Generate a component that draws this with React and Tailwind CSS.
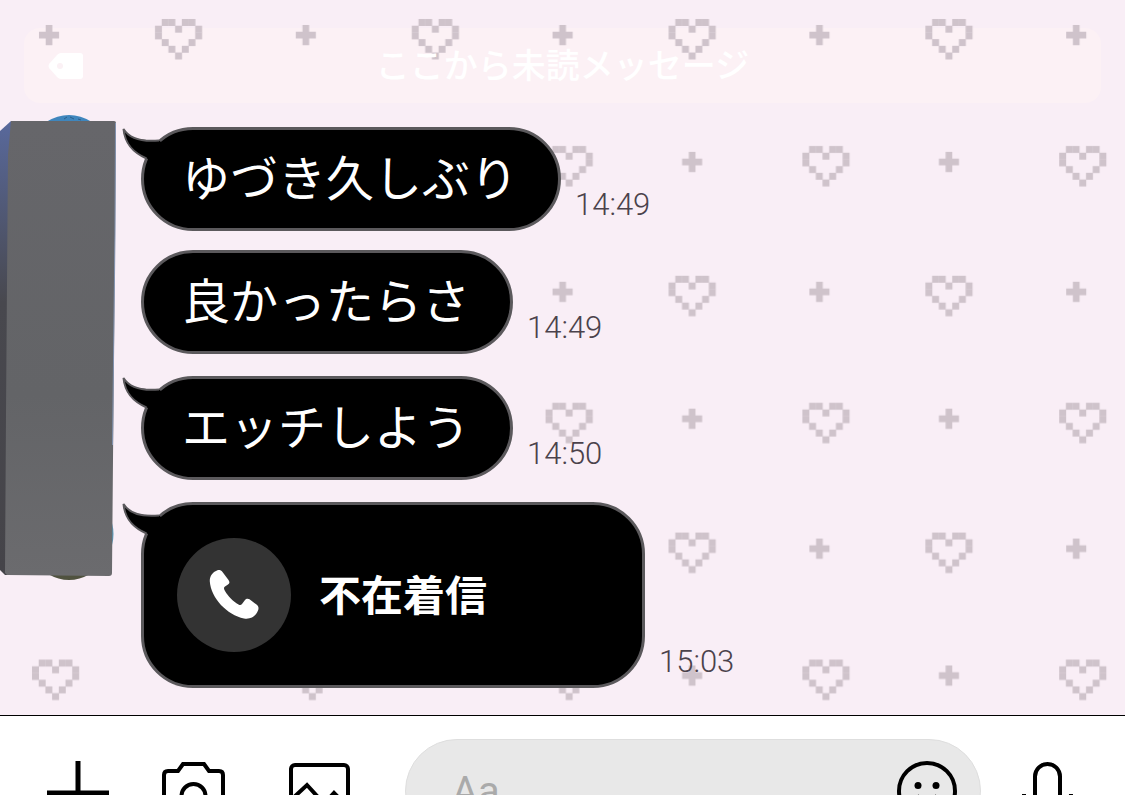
import React, { useState } from 'react';

const HEART_CELLS = [
  [1, 0], [2, 0], [4, 0], [5, 0],
  [0, 1], [3, 1], [6, 1],
  [0, 2], [6, 2],
  [1, 3], [5, 3],
  [2, 4], [4, 4],
  [3, 5],
];

const messages = [
  { id: 1, text: 'ゆづき久しぶり', time: '14:49', tail: true },
  { id: 2, text: '良かったらさ', time: '14:49', tail: false },
  { id: 3, text: 'エッチしよう', time: '14:50', tail: true },
  { id: 4, text: '不在着信', time: '15:03', tail: true, call: true },
];

const PixelHeart = ({ x, y }) => (
  <g transform={`translate(${x} ${y}) scale(6.7)`}>
    {HEART_CELLS.map(([cx, cy]) => (
      <rect key={`${cx}-${cy}`} x={cx} y={cy} width="1.04" height="1.04" />
    ))}
  </g>
);

const PixelPlus = ({ x, y }) => (
  <path transform={`translate(${x} ${y}) scale(6.7)`} d="M1 0h1v1h1v1h-1v1h-1v-1h-1v-1h1z" />
);

const Wallpaper = () => (
  <svg className="absolute inset-0 -z-10 h-full w-full" aria-hidden="true">
    <defs>
      <pattern id="hearts" width="256.8" height="256.8" patternUnits="userSpaceOnUse">
        <g fill="#cfc3cb">
          <PixelPlus x={39} y={25} />
          <PixelHeart x={155} y={19} />
          <PixelHeart x={32} y={146} />
          <PixelPlus x={168.5} y={152} />
        </g>
      </pattern>
    </defs>
    <rect width="100%" height="100%" fill="url(#hearts)" />
  </svg>
);

const Avatar = () => (
  <svg className="h-[465px] w-[117px]" viewBox="0 0 117 465" role="img" aria-label="Profile">
    <defs>
      <linearGradient id="side" x1="0" y1="0" x2="0" y2="1">
        <stop offset="0" stopColor="#59699c" />
        <stop offset="0.4" stopColor="#48484e" />
        <stop offset="1" stopColor="#454449" />
      </linearGradient>
      <linearGradient id="face" x1="0" y1="0" x2="0" y2="1">
        <stop offset="0" stopColor="#66666a" />
        <stop offset="0.6" stopColor="#636467" />
        <stop offset="1" stopColor="#6b6b6e" />
      </linearGradient>
    </defs>
    <path d="M46 7Q69 -7 92 7z" fill="#3f86bd" />
    <path d="M64 4l3-2M70 2l4 2M78 4l3 1" stroke="#2a5f8c" strokeWidth="1" />
    <path d="M48 459Q69 471 90 459z" fill="#50523f" />
    <path d="M112 408q3 11 0 22z" fill="#5b9cbc" />
    <path d="M0 16L11 6v454H5L0 455z" fill="url(#side)" />
    <path d="M11 6H114Q116 6 116 8L115 120L112 458Q112 461 109 461L7 460L5 458L6 300L8 40z" fill="url(#face)" />
    <path d="M115.500 8L115 120L112.500 330" fill="none" stroke="#8293b0" strokeWidth="1" />
  </svg>
);

const Tail = () => (
  <svg className="absolute -left-[22px] -top-[3px] h-9 w-12" viewBox="0 0 48 36" aria-hidden="true">
    <path d="M1 2C7 11 18 14 36 13L42 17L30 34L24 31C12 26 3 18 1 2z" fill="#000" />
    <path d="M37 13.500C20 15 7 11 1.500 2C3 18 12 26 24.500 31.500" fill="none" stroke="#5b595c" strokeWidth="2" />
  </svg>
);

const PhoneIcon = () => (
  <svg className="h-[50px] w-[50px]" viewBox="0 0 50 50" fill="#fff" aria-hidden="true">
    <path d="M8 .5C10-.5 12 0 13.500 2L19.500 10C21 12 20.500 13.500 19 14.500L16 16.500C14.500 17.500 14.800 19 16 21C19 26 24 31.500 29.500 34.500C31 35.300 32 35.200 33 34L36 30C37 28.600 39 28.300 40.500 29.300L47.500 34.500C49.500 36 50 38 49 40.500C46.500 46.500 42 49.500 35 48.500C18 45 2 28 .8 11.500C.5 6.500 3.500 2 8 .5Z" />
  </svg>
);

const Message = ({ text, time, tail, call }) => (
  <li className={`flex items-end gap-[14px] first:mt-0 ${tail ? 'mt-[22px]' : 'mt-[19px]'}`}>
    {call ? (
      <div className="relative flex h-[186px] w-[504px] items-center gap-7 rounded-[52px] border-3 border-[#5b595c] bg-black px-[33px]">
        {tail && <Tail />}
        <span className="flex h-[114px] w-[114px] items-center justify-center rounded-full bg-[#333333]">
          <PhoneIcon />
        </span>
        <span className="pb-1 text-[42px] leading-none font-bold text-white">{text}</span>
      </div>
    ) : (
      <div className="relative flex h-[104px] items-center rounded-full border-3 border-[#5b595c] bg-black pr-10 pl-[38px] text-5xl leading-none text-white">
        {tail && <Tail />}
        <span className="pb-2">{text}</span>
      </div>
    )}
    <time className="pb-[10px] font-[Roboto,sans-serif] text-[31px] leading-8 font-light text-[#4b424b]">{time}</time>
  </li>
);

const IconButton = ({ label, children }) => (
  <button type="button" aria-label={label} className="h-[66px] w-[66px] shrink-0">
    <svg className="h-full w-full" viewBox="0 0 66 66" fill="none" stroke="#000" strokeWidth="4" aria-hidden="true">
      {children}
    </svg>
  </button>
);

const App = () => {
  const [draft, setDraft] = useState('');

  return (
    <div className="flex h-screen flex-col overflow-hidden bg-white font-['Noto_Sans_CJK_JP',sans-serif]">
      <main className="relative isolate min-h-0 flex-1 overflow-hidden bg-[#f9eef6]">
        <Wallpaper />

        <div className="relative mx-6 mt-7 flex h-[75px] items-center px-6">
          {/* sits under the wallpaper so the hearts keep their colour */}
          <div className="absolute inset-0 -z-20 rounded-2xl bg-[#fcf1f5]" />
          <svg className="h-7 w-9" viewBox="0 0 36 28" aria-hidden="true">
            <path d="M13 1H32Q35 1 35 4V24Q35 27 32 27H13Q11 27 9 25L1 16Q0 14 1 12L9 3Q11 1 13 1z" fill="#fff" />
            <circle cx="12" cy="14" r="3" fill="#fbf1f5" />
          </svg>
          <p className="flex-1 pr-9 pb-1 text-center text-[34px] leading-none font-medium text-white">
            ここから未読メッセージ
          </p>
        </div>

        <div className="mt-3 flex items-start">
          <div className="w-[141px] shrink-0">
            <Avatar />
          </div>
          <ul className="flex flex-col pt-3">
            {messages.map((message) => (
              <Message key={message.id} {...message} />
            ))}
          </ul>
        </div>
      </main>

      <footer className="h-20 shrink-0 overflow-hidden border-t border-black bg-white">
        <div className="flex items-start pr-11 pl-[45px] pt-[23px]">
          <div className="pt-[22px]">
            <IconButton label="Add">
              <path d="M33 0V64M2 32H64" strokeWidth="5" />
            </IconButton>
          </div>
          <div className="flex gap-[60px] pt-[22px] pl-[50px]">
            <IconButton label="Camera">
              <path d="M7 10H17L22 3H43L48 10H58Q62 10 62 14V56Q62 60 58 60H7Q3 60 3 56V14Q3 10 7 10z" />
              <circle cx="32.500" cy="35" r="12" />
            </IconButton>
            <IconButton label="Photos">
              <rect x="4" y="4" width="57" height="57" rx="4" />
              <path d="M5 38L20 24L40 46M34 46L47 32L61 46" />
            </IconButton>
          </div>
          <label className="ml-[52px] flex h-[104px] min-w-0 flex-1 items-start rounded-full border border-[#dedede] bg-[#e8e8e8] pr-5 pl-[46px]">
            <input
              type="text"
              aria-label="Message"
              value={draft}
              onChange={(e) => setDraft(e.target.value)}
              placeholder="Aa"
              className="h-[102px] min-w-0 flex-1 bg-transparent font-[Roboto,sans-serif] text-[40px] text-black outline-none placeholder:text-[#aaaaaa]"
            />
            <span className="pt-5">
              <IconButton label="Stickers">
                <circle cx="33" cy="31" r="28" />
                <circle cx="24" cy="25.500" r="3.500" fill="#000" stroke="none" />
                <circle cx="42" cy="25.500" r="3.500" fill="#000" stroke="none" />
                <path d="M23 35.500Q33 51 43 35.500" />
              </IconButton>
            </span>
          </label>
          <div className="pt-[22px] pl-[34px]">
            <IconButton label="Voice message">
              <rect x="20" y="3" width="25" height="44" rx="12.500" />
              <path d="M9 33Q10 57 32.500 57Q55 57 56 33M32.500 57V66" />
            </IconButton>
          </div>
        </div>
      </footer>
    </div>
  );
};

export default App;
